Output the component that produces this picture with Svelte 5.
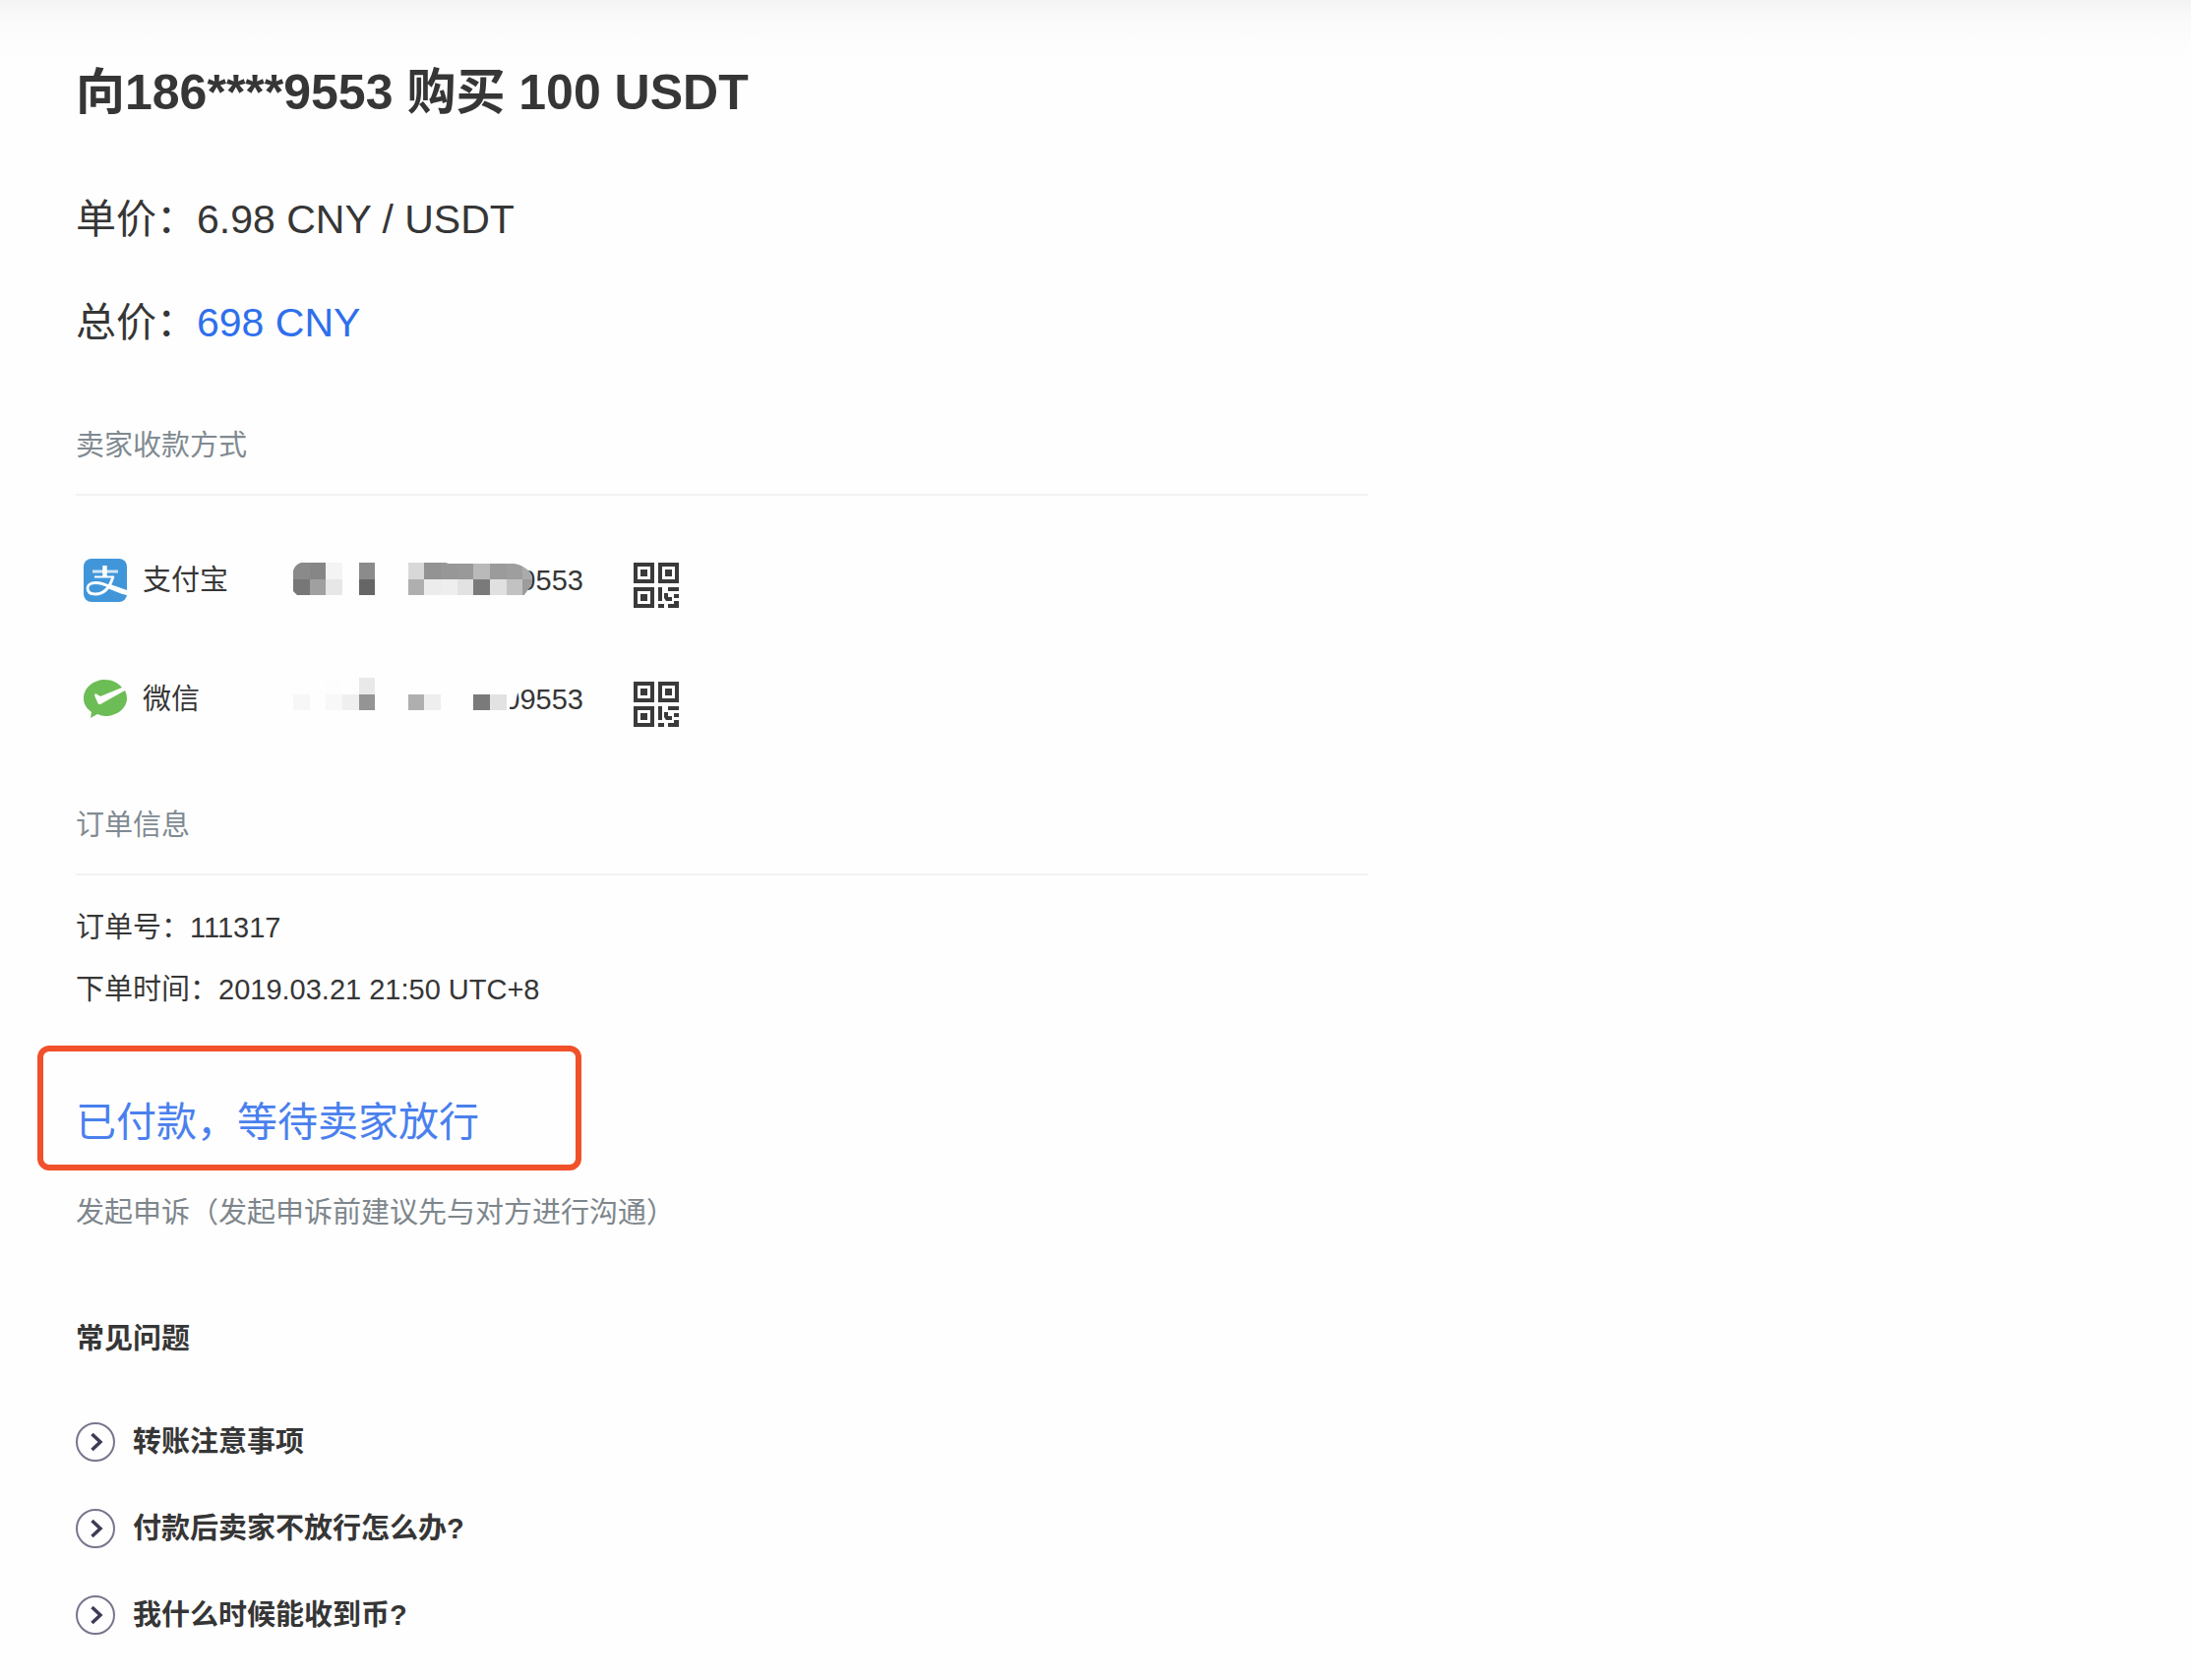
<script>
  const payments = [
    {
      id: 'alipay',
      name: '支付宝',
      tail: '9553',
      top: 10,
      blocks: [
        ['#8a8a8a', '#868686', '#f4f4f4', null, '#8b8b8b', null, null, '#d8d8d8', '#939393', '#979797', '#999999', '#b9b9b9', '#9b9b9b', '#9e9e9e', '#ababab'],
        ['#777777', '#a0a0a0', '#e7e7e7', null, '#666666', null, null, '#afafaf', '#ececec', '#eeeeee', '#e2e2e2', '#7a7a7a', '#e0e0e0', '#c2c2c2', '#9c9c9c']
      ]
    },
    {
      id: 'wechat',
      name: '微信',
      tail: '09553',
      top: 6,
      blocks: [
        [null, null, '#fdfdfd', null, '#e9e9e9'],
        ['#f7f7f7', null, '#f8f8f8', '#efefef', '#949494', null, null, '#afafaf', '#eeeeee', null, null, '#7a7a7a', '#e2e2e2']
      ]
    }
  ];

  const questions = ['转账注意事项', '付款后卖家不放行怎么办?', '我什么时候能收到币?'];
  const edge = (i) => Math.round((i * 50) / 3);
</script>

<main lang="zh-CN">
  <div class="content">
    <h1>向186****9553 购买 100 USDT</h1>
    <p class="price">单价：6.98 CNY / USDT</p>
    <p class="price">总价：<span class="amount">698 CNY</span></p>

    <section class="methods">
      <h2>卖家收款方式</h2>
      <ul class="payments">
        {#each payments as pay (pay.id)}
          <li>
            {#if pay.id === 'alipay'}
              <svg class="brand" viewBox="0 0 44 44" aria-hidden="true">
                <rect width="44" height="44" rx="8" fill="#4196da" />
                <g fill="none" stroke="#fff">
                  <path d="M9 13h26" stroke-width="3" opacity=".75" />
                  <path d="M11 18.500h20" stroke-width="2" />
                  <path d="M21.500 7v11" stroke-width="4.500" />
                  <path d="M30 18c-2 7-7 18-18 18-5 0-8-2-8-6 0-3 3-5.500 8-5.500 6 0 12 2.500 17 5" stroke-width="2.800" />
                </g>
                <path d="M27 26l17 6v5c-6-1-12-4-20-7z" fill="#fff" />
              </svg>
            {:else}
              <svg class="brand" viewBox="0 0 44 44" aria-hidden="true">
                <path d="M22 2C10 2 0 10 0 21c0 6 3 10 8 14l-1 6 7-4c3 1 5 2 8 2 12 0 22-8 22-18 0-3-1-6-2-8L17 27l-2 0-4-9 1-2 5 3 22-9C35 5 29 2 22 2z" fill="#6dbd56" />
              </svg>
            {/if}
            <span class="name">{pay.name}</span>
            <span class="account">
              <span class="digits">{pay.tail}</span>
              <svg class="mosaic" viewBox="0 0 295 56" aria-hidden="true">
                <defs>
                  <clipPath id="clip-{pay.id}">
                    {#if pay.id === 'alipay'}
                      <path d="M8 10H155L158 11H225Q235 13 241 20Q246 28 240 36L234 44H5L0 39V18Q2 12 8 10z" />
                    {:else}
                      <rect width="295" height="56" />
                    {/if}
                  </clipPath>
                </defs>
                {#if pay.id === 'wechat'}
                  <path d="M200 8H228V22Q227 32 220 36V50H200z" fill="#fefefe" />
                {/if}
                <g clip-path="url(#clip-{pay.id})" shape-rendering="crispEdges">
                  {#each pay.blocks as row, r}
                    {#each row as color, c}
                      {#if color}
                        <rect x={edge(c)} y={pay.top + edge(r)} width={edge(c + 1) - edge(c)} height={edge(r + 1) - edge(r)} fill={color} />
                      {/if}
                    {/each}
                  {/each}
                </g>
              </svg>
            </span>
            <button class="qr" type="button" aria-label="{pay.name}二维码">
              <svg viewBox="0 0 46 46" aria-hidden="true">
                <g fill="none" stroke="#3a3a3a" stroke-width="4">
                  <rect x="2" y="2" width="17" height="17" />
                  <rect x="27" y="2" width="17" height="17" />
                  <rect x="2" y="27" width="17" height="17" />
                </g>
                <g fill="#3a3a3a">
                  <rect x="7" y="7" width="7" height="7" />
                  <rect x="32" y="7" width="7" height="7" />
                  <rect x="7" y="32" width="7" height="7" />
                  <path d="M25 25h4v14h-4zM35 25h11v4h-11zM31 31h4v4h4v4h-6l-2-3zM41 32h5v4h-5zM25 42h6v4h-6zM35 42h6v-3h5v7h-11z" />
                </g>
              </svg>
            </button>
          </li>
        {/each}
      </ul>
    </section>

    <section class="order">
      <h2>订单信息</h2>
      <p>订单号：111317</p>
      <p>下单时间：2019.03.21 21:50 UTC+8</p>
    </section>

    <div class="status">已付款，等待卖家放行</div>
    <a class="appeal" href="#appeal">发起申诉（发起申诉前建议先与对方进行沟通）</a>

    <section class="faq">
      <h3>常见问题</h3>
      {#each questions as question}
        <button type="button">
          <svg viewBox="0 0 40 40" aria-hidden="true">
            <circle cx="20" cy="20" r="19" fill="none" stroke="#77768c" stroke-width="2" />
            <path d="M16.500 12l8.500 8-8.500 8" fill="none" stroke="#3d3c57" stroke-width="3.500" />
          </svg>
          {question}
        </button>
      {/each}
    </section>
  </div>
</main>

<style>
  :global(body) {
    margin: 0;
    background: #fefefe;
  }

  main {
    box-sizing: border-box;
    min-height: 100vh;
    padding: 64px 65px 40px 77px;
    background: linear-gradient(#f4f4f4, #fafafa 20px, #fdfdfd 42px, #fefefe 64px);
    color: #363636;
    font-family: 'Liberation Sans', 'Noto Sans CJK SC', sans-serif;
    font-size: 29px;
    line-height: 40px;
  }

  .content {
    display: flex;
    flex-direction: column;
    align-items: flex-start;
  }

  h1,
  h2,
  h3,
  p,
  ul {
    margin: 0;
    padding: 0;
  }

  h1 {
    margin-bottom: 24px;
    font-size: 50px;
    line-height: 60px;
  }

  .price {
    margin-top: 45px;
    font-size: 41px;
    line-height: 60px;
  }

  .amount {
    color: #2f6fed;
  }

  .methods,
  .order {
    width: 63%;
    min-width: 640px;
  }

  .methods {
    margin-top: 75px;
  }

  h2 {
    padding-bottom: 29px;
    border-bottom: 2px solid #f1f2f2;
    color: #808a91;
    font-size: 29px;
    font-weight: 400;
    line-height: 40px;
  }

  .payments {
    display: flex;
    flex-direction: column;
    gap: 65px;
    padding: 58px 0 0 8px;
    list-style: none;
  }

  .payments li {
    display: flex;
    align-items: center;
    height: 56px;
  }

  .brand {
    width: 44px;
    height: 44px;
    margin-right: 16px;
  }

  .name {
    width: 153px;
  }

  .account {
    display: grid;
    align-items: center;
    justify-items: end;
    width: 295px;
    margin-right: 51px;
  }

  .digits,
  .mosaic {
    grid-area: 1 / 1;
  }

  .mosaic {
    width: 295px;
    height: 56px;
  }

  button {
    padding: 0;
    border: 0;
    background: none;
    color: inherit;
    font: inherit;
    cursor: pointer;
  }

  .qr {
    align-self: flex-end;
    height: 46px;
  }

  .qr svg {
    display: block;
    width: 46px;
    height: 46px;
  }

  .order {
    margin-top: 80px;
  }

  .order p {
    margin-top: 23px;
  }

  .order h2 + p {
    margin-top: 33px;
  }

  .status {
    margin: 37px 0 23px -39px;
    padding: 42px 98px 13px 33px;
    border: 6px solid #f0512a;
    border-radius: 12px;
    color: #4a80ee;
    font-size: 41px;
    line-height: 60px;
  }

  .appeal {
    color: #7d868c;
    text-decoration: none;
  }

  .faq {
    display: flex;
    flex-direction: column;
    align-items: flex-start;
    gap: 48px;
    margin-top: 88px;
    font-weight: 700;
  }

  h3 {
    margin-bottom: 17px;
    font-size: 29px;
    line-height: 40px;
  }

  .faq button {
    display: flex;
    align-items: center;
    gap: 18px;
  }

  .faq svg {
    width: 40px;
    height: 40px;
  }
</style>
